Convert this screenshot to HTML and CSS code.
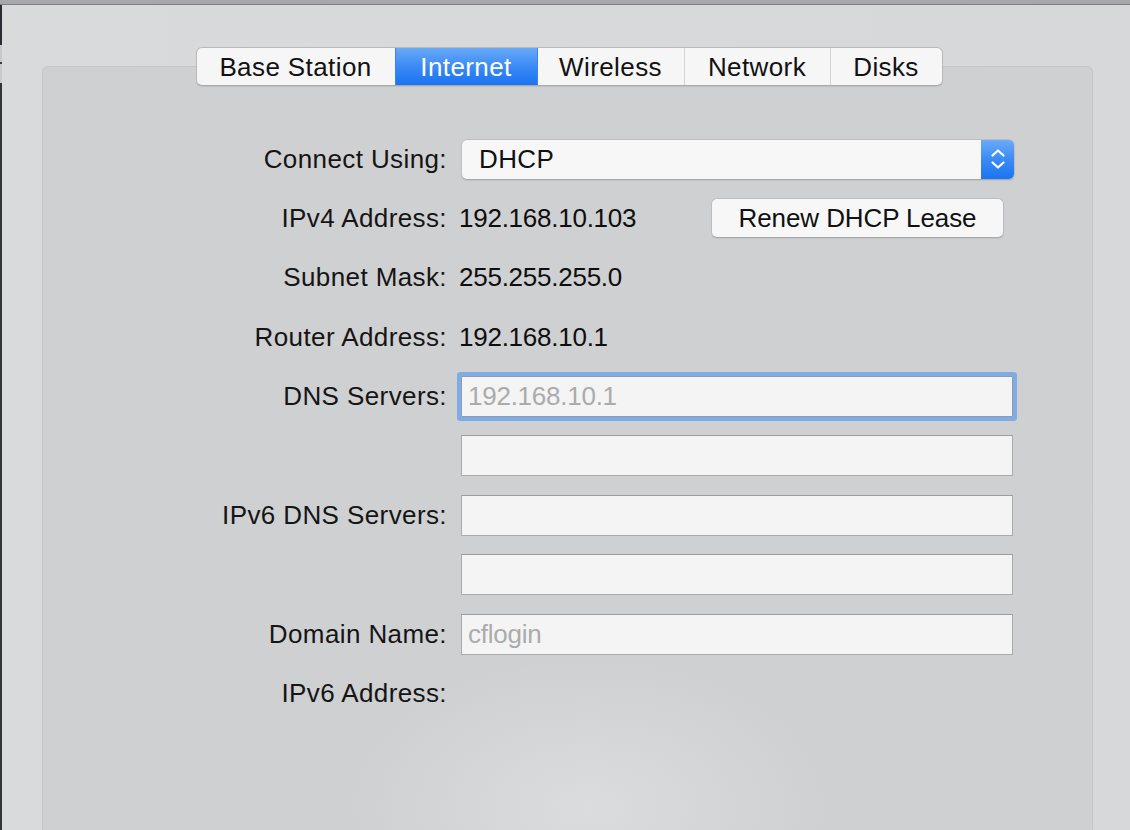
FILE: index.html
```html
<!DOCTYPE html>
<html>
<head>
<meta charset="utf-8">
<link rel="stylesheet" href="styles.css">
</head>
<body>
<div class="topbar"></div>
<div class="window">
  <div class="edge"></div>
  <div class="content">
    <div class="tabbar">
      <div class="tabs">
        <div class="tab tab-base">Base Station</div>
        <div class="tab tab-internet active">Internet</div>
        <div class="tab tab-wireless">Wireless</div>
        <div class="tab tab-network">Network</div>
        <div class="tab tab-disks">Disks</div>
      </div>
    </div>
    <div class="panel">
      <div class="form">
        <div class="label">Connect Using:</div>
        <div class="value">
          <div class="popup">
            <span class="popup-text">DHCP</span>
            <span class="stepper">
              <svg width="16" height="24" viewBox="0 0 16 24"><path d="M2.5 8.5 L8 3.5 L13.5 8.5" fill="none" stroke="#fff" stroke-width="2.2" stroke-linecap="round" stroke-linejoin="round"/><path d="M2.5 15.5 L8 20.5 L13.5 15.5" fill="none" stroke="#fff" stroke-width="2.2" stroke-linecap="round" stroke-linejoin="round"/></svg>
            </span>
          </div>
        </div>

        <div class="label">IPv4 Address:</div>
        <div class="value split">
          <span class="text">192.168.10.103</span>
          <div class="button">Renew DHCP Lease</div>
        </div>

        <div class="label">Subnet Mask:</div>
        <div class="value"><span class="text">255.255.255.0</span></div>

        <div class="label">Router Address:</div>
        <div class="value"><span class="text">192.168.10.1</span></div>

        <div class="label">DNS Servers:</div>
        <div class="value"><div class="field focus"><span class="ph">192.168.10.1</span></div></div>

        <div class="label"></div>
        <div class="value"><div class="field"></div></div>

        <div class="label">IPv6 DNS Servers:</div>
        <div class="value"><div class="field"></div></div>

        <div class="label"></div>
        <div class="value"><div class="field"></div></div>

        <div class="label">Domain Name:</div>
        <div class="value"><div class="field"><span class="ph">cflogin</span></div></div>

        <div class="label">IPv6 Address:</div>
        <div class="value"></div>
      </div>
    </div>
  </div>
</div>
</body>
</html>
```

FILE: styles.css
```css
html, body {
  margin: 0;
  padding: 0;
}
body {
  width: 1130px;
  height: 830px;
  overflow: hidden;
  background: #d8d9db;
  font-family: "Liberation Sans", Arial, sans-serif;
  font-size: 26px;
  letter-spacing: 0.4px;
  color: #111;
}
.topbar {
  height: 4px;
  background: #a8a7ac;
  border-bottom: 1px solid #7e7d82;
}
.window {
  display: flex;
  height: 825px;
  background: linear-gradient(90deg, #d9dadc 0%, #d7d8da 100%);
}
.edge {
  width: 2px;
  flex: none;
  background: linear-gradient(180deg,
    #2c2b33 0px, #2c2b33 40px,
    #c9c9cb 40px, #c9c9cb 57px,
    #3a3a40 57px, #3a3a40 59px,
    #cbcbcd 59px, #cbcbcd 78px,
    #34333a 78px, #34333a 100%);
}
.content {
  flex: 1;
  display: flex;
  flex-direction: column;
  padding: 42px 37px 0 40px;
}
.tabbar {
  display: flex;
  justify-content: center;
  position: relative;
  z-index: 2;
  padding-left: 3px;
}
.tabs {
  display: flex;
  height: 37px;
  border: 1px solid #b9b9bb;
  border-bottom-color: #a9a9ab;
  border-radius: 6px;
  background: #f6f6f6;
  box-shadow: 0 1px 1px rgba(0,0,0,0.08);
  overflow: hidden;
}
.tab {
  display: flex;
  align-items: center;
  justify-content: center;
  color: #121212;
  border-left: 1px solid #d3d3d3;
  line-height: 1;
}
.tab:first-child { border-left: none; }
.tab-base { width: 198px; }
.tab-internet { width: 141px; }
.tab-wireless { width: 146px; }
.tab-network { width: 145px; }
.tab-disks { width: 111px; }
.tab.active {
  background: linear-gradient(180deg, #68a9f7 0%, #3b8af5 50%, #1a73f0 100%);
  color: #fff;
  border-left-color: #3a86f0;
}
.tab.active + .tab { border-left-color: #3a86f0; }
.panel {
  margin-top: -20px;
  flex: 1;
  border: 1px solid #c6c7c9;
  border-bottom: none;
  border-radius: 6px 6px 0 0;
  background:
    radial-gradient(ellipse 240px 150px at 52% 97%, rgba(222,223,225,0.8) 0%, rgba(207,208,210,0) 100%),
    #cfd0d2;
  padding-top: 72px;
}
.form {
  display: grid;
  grid-template-columns: 404px 556px;
  grid-auto-rows: 40px;
  row-gap: 19.4px;
  column-gap: 12px;
}
.label {
  display: flex;
  align-items: center;
  justify-content: flex-end;
  color: #151515;
  white-space: nowrap;
}
.value {
  display: flex;
  align-items: center;
}
.value.split {
  justify-content: space-between;
  padding-right: 11px;
}
.text {
  color: #0e0e0e;
  letter-spacing: -0.25px;
}
.popup {
  margin-left: 2px;
  width: 552px;
  height: 39px;
  display: flex;
  align-items: center;
  justify-content: space-between;
  background: #f7f7f7;
  border: 1px solid #bdbdbf;
  border-bottom-color: #a9a9ab;
  border-radius: 6px;
  box-shadow: 0 1px 1px rgba(0,0,0,0.06);
  overflow: hidden;
}
.popup-text {
  padding-left: 17px;
  color: #111;
}
.stepper {
  width: 33px;
  height: 100%;
  display: flex;
  align-items: center;
  justify-content: center;
  background: linear-gradient(180deg, #6aabf8 0%, #3b8bf5 50%, #1b74f0 100%);
}
.button {
  width: 291px;
  height: 38px;
  display: flex;
  align-items: center;
  justify-content: center;
  background: #f7f7f7;
  border: 1px solid #bdbdbf;
  border-bottom-color: #a8a8aa;
  border-radius: 6px;
  box-shadow: 0 1px 1px rgba(0,0,0,0.06);
  color: #111;
  letter-spacing: -0.1px;
}
.field {
  margin-left: 2px;
  width: 552px;
  box-sizing: border-box;
  height: 41px;
  display: flex;
  align-items: center;
  background: #f4f4f4;
  border: 1px solid #aaaaab;
  border-top-color: #9d9d9e;
  padding-left: 6px;
}
.field.focus {
  border-color: #8f9bb0;
  box-shadow: 0 0 0 4px #7facE4;
  border-radius: 1px;
}
.ph {
  color: #ababab;
  letter-spacing: -0.25px;
}
```
